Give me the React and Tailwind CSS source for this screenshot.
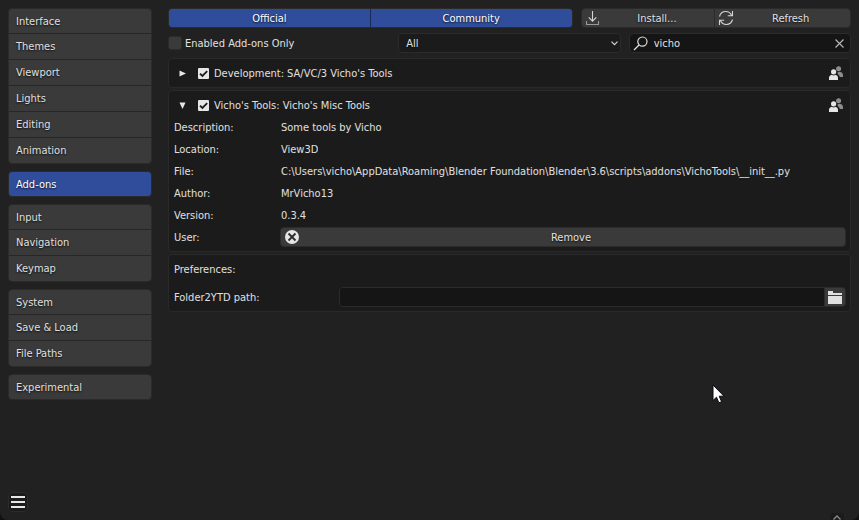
import { useState } from "react";

const NAV_GROUPS = [
  ["Interface", "Themes", "Viewport", "Lights", "Editing", "Animation"],
  ["Add-ons"],
  ["Input", "Navigation", "Keymap"],
  ["System", "Save & Load", "File Paths"],
  ["Experimental"],
];

const DETAILS = [
  ["Description:", "Some tools by Vicho"],
  ["Location:", "View3D"],
  [
    "File:",
    "C:\\Users\\vicho\\AppData\\Roaming\\Blender Foundation\\Blender\\3.6\\scripts\\addons\\VichoTools\\__init__.py",
  ],
  ["Author:", "MrVicho13"],
  ["Version:", "0.3.4"],
];

const SHADOW = "[text-shadow:0_1px_2px_#000000cc]";
const BUTTON = "bg-[#3a3a3a] hover:bg-[#464646]";
const PANEL = "rounded-[4px] border border-[#292929] bg-[#1b1b1b] py-[3px] pr-1 pl-[5px]";

function DownloadIcon() {
  return (
    <svg width="14" height="14" viewBox="0 0 14 14" fill="none" stroke="#d4d4d4" strokeWidth="1.1">
      <path d="M6.500 0v10M2.700 6.400L6.500 10.200l3.800-3.800" />
      <path d="M.5 10v3.500h12V10" stroke="#999999" />
    </svg>
  );
}

function RefreshIcon() {
  return (
    <svg width="16" height="16" viewBox="0 0 16 16" fill="none" stroke="#d4d4d4" strokeWidth="1.1">
      <path d="M1.5 6.5C2.3 3.4 4.9 1.500 7.700 1.500c2.600 0 4.700 1.400 5.800 3.800M14.500 1v4.700H9.800" />
      <path d="M14.5 9.5c-.8 3.1-3.400 5-6.200 5-2.600 0-4.700-1.400-5.800-3.800M1.5 15v-4.700h4.700" />
    </svg>
  );
}

function SearchIcon() {
  return (
    <svg width="15" height="15" viewBox="0 0 15 15" fill="none" stroke="#e0e0e0" strokeWidth="1.2">
      <circle cx="9.4" cy="5.6" r="4.6" />
      <path d="M6 9L1 14" />
    </svg>
  );
}

function CommunityIcon() {
  return (
    <svg width="14" height="14" viewBox="0 0 14 14">
      <g fill="#8c8c8c">
        <circle cx="9.6" cy="2.7" r="2.5" />
        <path d="M8.6 6.6c.5-.6 1-.8 1.6-.8 1.600 0 3.800 1.200 3.800 3v2.200h-3.200c-.2-1.300-.9-2.200-2-2.800z" />
      </g>
      <g fill="#e6e6e6">
        <circle cx="4.6" cy="5.800" r="2.600" />
        <path d="M0 14v-2.200c0-1.600 1.400-2.600 2.800-3 1 .8 2.600.8 3.600 0 1.400.4 2.600 1.400 2.600 3V14z" />
      </g>
    </svg>
  );
}

function FolderIcon() {
  return (
    <svg width="14" height="13" viewBox="0 0 14 13" fill="#e0e0e0">
      <path d="M0 4V0h5v2h9v2z" />
      <path d="M0 5h14v8H0z" />
    </svg>
  );
}

function Sidebar() {
  const [active, setActive] = useState("Add-ons");
  return (
    <aside className="flex w-36 shrink-0 flex-col gap-[7px]">
      {NAV_GROUPS.map((group) => (
        <nav
          key={group[0]}
          className="flex flex-col divide-y divide-[#272727] overflow-hidden rounded-[4px] border border-[#2b2b2b]"
        >
          {group.map((name) => (
            <button
              key={name}
              type="button"
              onClick={() => setActive(name)}
              className={`h-[26px] px-[7px] text-left first:h-[25px] last:h-[25px] only:h-6 ${SHADOW} ${
                active === name ? "bg-[#304d9b] text-white" : BUTTON
              }`}
            >
              {name}
            </button>
          ))}
        </nav>
      ))}
      <button
        type="button"
        aria-label="Menu"
        className="mt-auto flex size-5 flex-col items-center justify-center gap-[3px] rounded-[4px] border border-[#2b2b2b] bg-[#1b1b1b]"
      >
        <span className="h-0.5 w-3.5 bg-[#e6e6e6]" />
        <span className="h-0.5 w-3.5 bg-[#e6e6e6]" />
        <span className="h-0.5 w-3.5 bg-[#e6e6e6]" />
      </button>
    </aside>
  );
}

function AddonHeader({ title, open }) {
  return (
    <div className="flex h-[22px] items-center">
      <button
        type="button"
        aria-label={open ? "Collapse" : "Expand"}
        aria-expanded={open}
        className="flex w-6 items-center pl-[5px]"
      >
        <svg width="7" height="7" viewBox="0 0 7 7" fill="#e6e6e6">
          {open ? <path d="M.5 .5h6L3.500 7z" /> : <path d="M.5 .5v6L7 3.500z" />}
        </svg>
      </button>
      <label className="flex items-center gap-[5px]">
        <span className="grid size-[11px] place-items-center">
          <input
            type="checkbox"
            defaultChecked
            className="peer col-start-1 row-start-1 size-[11px] appearance-none rounded-[1px] bg-[#3a3a3a] checked:bg-[#e6e6e6]"
          />
          <svg
            className="pointer-events-none invisible col-start-1 row-start-1 peer-checked:visible"
            width="9"
            height="9"
            viewBox="0 0 9 9"
            fill="none"
            stroke="#1b1b1b"
            strokeWidth="1.800"
          >
            <path d="M1 4.600l2.400 2.400L8.200 2.200" />
          </svg>
        </span>
        {title}
      </label>
      <span className="ml-auto pr-[3px]">
        <CommunityIcon />
      </span>
    </div>
  );
}

export default function App() {
  const [query, setQuery] = useState("vicho");
  return (
    <div className="bg-[#111111]">
      <div className="relative flex min-h-screen gap-4 overflow-hidden rounded-b-lg bg-[#212121] p-2 font-['DejaVu_Sans_Condensed','DejaVu_Sans',sans-serif] text-[11px] leading-[17px] text-[#e0e0e0]">
        <Sidebar />
        <main className="flex min-w-0 flex-1 flex-col">
          <div className="flex h-5 gap-2">
            <div className="flex flex-3 divide-x divide-[#1c2b55] overflow-hidden rounded-[4px] border border-[#2b2b2b]">
              <button type="button" className={`flex-1 bg-[#304d9b] text-white ${SHADOW}`}>
                Official
              </button>
              <button type="button" className={`flex-1 bg-[#304d9b] text-white ${SHADOW}`}>
                Community
              </button>
            </div>
            <div className="flex flex-2 divide-x divide-[#2b2b2b] overflow-hidden rounded-[4px] border border-[#2b2b2b]">
              <button type="button" className={`flex flex-1 items-center pl-1 ${BUTTON} ${SHADOW}`}>
                <DownloadIcon />
                <span className="flex-1">Install...</span>
              </button>
              <button type="button" className={`flex flex-1 items-center px-[3px] ${BUTTON} ${SHADOW}`}>
                <RefreshIcon />
                <span className="flex-1">Refresh</span>
              </button>
            </div>
          </div>

          <div className="mt-[5px] grid h-5 grid-cols-3 gap-2">
            <label className="flex items-center gap-[3px]">
              <input
                type="checkbox"
                className="size-3.5 appearance-none rounded-[3px] border border-[#2b2b2b] bg-[#3a3a3a] checked:bg-[#304d9b]"
              />
              Enabled Add-ons Only
            </label>
            <div className="grid items-center">
              <select
                aria-label="Category"
                className={`col-start-1 row-start-1 h-5 w-full appearance-none rounded-[4px] border border-[#2b2b2b] bg-[#1b1b1b] px-[7px] ${SHADOW}`}
              >
                <option>All</option>
                <option>Development</option>
                <option>Vicho's Tools</option>
              </select>
              <svg
                className="pointer-events-none col-start-1 row-start-1 mr-[3px] justify-self-end"
                width="7"
                height="5"
                viewBox="0 0 7 5"
                fill="none"
                stroke="#d4d4d4"
                strokeWidth="1.200"
              >
                <path d="M.5 .7l3 3 3-3" />
              </svg>
            </div>
            <div className="flex items-center rounded-[4px] border border-[#2b2b2b] bg-[#151515] pr-1 pl-[3px]">
              <SearchIcon />
              <input
                type="text"
                aria-label="Search"
                value={query}
                onChange={(e) => setQuery(e.target.value)}
                className="ml-1.5 h-[17px] min-w-0 flex-1 bg-transparent outline-none"
              />
              <button type="button" aria-label="Clear search" onClick={() => setQuery("")} className="px-0.5">
                <svg width="9" height="9" viewBox="0 0 9 9" stroke="#b8b8b8" strokeWidth="1.100">
                  <path d="M.5 .5l8 8M8.500 .5l-8 8" />
                </svg>
              </button>
            </div>
          </div>

          <section className={`mt-[5px] ${PANEL}`}>
            <AddonHeader title="Development: SA/VC/3 Vicho's Tools" />
          </section>

          <section className={`mt-0.5 ${PANEL}`}>
            <AddonHeader title="Vicho's Tools: Vicho's Misc Tools" open />
            <dl>
              {DETAILS.map(([term, value]) => (
                <div key={term} className="flex h-[22px] items-center">
                  <dt className="w-[107px] shrink-0">{term}</dt>
                  <dd className="min-w-0 truncate">{value}</dd>
                </div>
              ))}
            </dl>
            <div className="flex h-[22px] items-center">
              <span className="w-[106px] shrink-0">User:</span>
              <button
                type="button"
                className={`flex h-5 flex-1 items-center rounded-[4px] border border-[#2b2b2b] px-[3px] ${BUTTON} ${SHADOW}`}
              >
                <svg width="16" height="16" viewBox="0 0 16 16">
                  <circle cx="8" cy="8" r="7" fill="#e6e6e6" />
                  <path d="M4.500 4.500l7 7M11.500 4.500l-7 7" stroke="#2e2e2e" strokeWidth="1.900" />
                </svg>
                <span className="flex-1">Remove</span>
              </button>
            </div>
          </section>

          <section className={`mt-0.5 flex flex-col gap-1.5 ${PANEL}`}>
            <h2 className="flex h-[22px] items-center">Preferences:</h2>
            <div className="flex h-[22px] items-center">
              <label htmlFor="folder-path" className="w-[165px] shrink-0">
                Folder2YTD path:
              </label>
              <div className="flex h-5 flex-1 divide-x divide-[#2b2b2b] overflow-hidden rounded-[4px] border border-[#2b2b2b]">
                <input id="folder-path" type="text" className="min-w-0 flex-1 bg-[#151515] px-1.5 outline-none" />
                <button type="button" aria-label="Browse" className={`flex w-5 items-center justify-center ${BUTTON}`}>
                  <FolderIcon />
                </button>
              </div>
            </div>
          </section>
        </main>

        <span className="absolute right-[15px] bottom-0 flex h-[7px] w-3.5 items-end justify-center rounded-t-[3px] bg-[#1b1b1b]">
          <svg width="8" height="5" viewBox="0 0 8 5" fill="none" stroke="#8c8c8c" strokeWidth="1.300">
            <path d="M.5 4.500L4 1l3.500 3.500" />
          </svg>
        </span>

        <svg
          className="pointer-events-none absolute top-[384px] left-[712px]"
          width="13"
          height="20"
          viewBox="0 0 13 20"
        >
          <path
            d="M1 1v15.500l3.500-3.300 2.400 5.600 2.700-1.100-2.400-5.500H12z"
            fill="#ffffff"
            stroke="#0a0a14"
            strokeWidth="1"
          />
        </svg>
      </div>
    </div>
  );
}
